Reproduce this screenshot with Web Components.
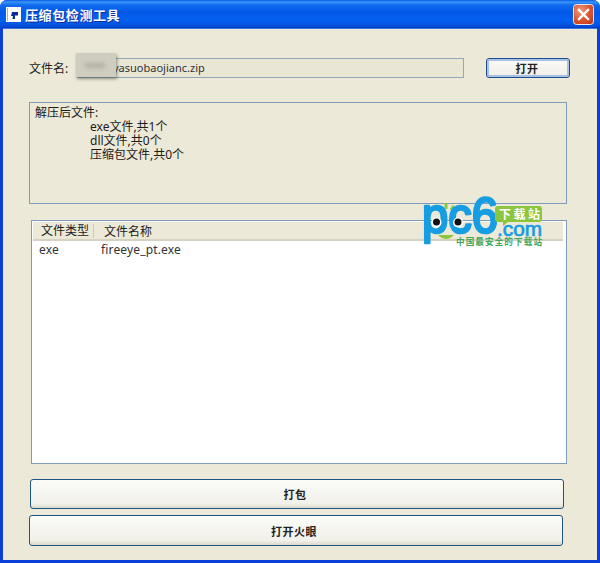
<!DOCTYPE html>
<html>
<head>
<meta charset="utf-8">
<style>
  html, body { margin: 0; padding: 0; }
  body { width: 600px; height: 563px; overflow: hidden; font: 12px "Noto Sans", "Noto Sans CJK SC", sans-serif; color: #1c1c1c; }
</style>
</head>
<body>
<xp-window caption="压缩包检测工具">
  <file-row name="文件名:" value="yasuobaojianc.zip" action="打开"></file-row>
  <result-box>
    <div>解压后文件:</div>
    <div slot="items">exe文件,共1个</div>
    <div slot="items">dll文件,共0个</div>
    <div slot="items">压缩包文件,共0个</div>
  </result-box>
  <file-list>
    <list-row type="exe" name="fireeye_pt.exe"></list-row>
  </file-list>
  <xp-button style="margin:15px 3px 0 1px;height:30px">打包</xp-button>
  <xp-button style="margin:6px 4px 0 0;height:31px">打开火眼</xp-button>
  <pc6-logo></pc6-logo>
</xp-window>

<script>
class XpWindow extends HTMLElement {
  constructor() {
    super();
    this.attachShadow({ mode: "open" }).innerHTML = `
      <style>
        :host { display: flex; flex-direction: column; width: 600px; height: 563px; box-sizing: border-box; border-radius: 7px 7px 0 0; overflow: hidden; position: relative; background: #0a3fd8; }
        .bar { flex: 0 0 28px; display: flex; align-items: center; gap: 4px; padding: 0 6px 0 6px; box-sizing: border-box;
          background: linear-gradient(#0a5ae6 0, #3a94f7 2px, #0f6cf0 5px, #0358e6 12px, #0360f0 20px, #0350dc 26px, #0234c0 28px); }
        .bar svg { display: block; }
        .cap { flex: 1; color: #fff; font: bold 13px "Noto Sans CJK SC", sans-serif; letter-spacing: .6px; text-shadow: 1px 1px 0 #0b2f9e; }
        .body { flex: 1; display: flex; flex-direction: column; margin: 0 3px 3px 3px; padding: 29px 30px 0 26px; background: #ece9d8; border-top: 1px solid #3a7be0; box-sizing: border-box; min-height: 0; }
      </style>
      <div class="bar">
        <svg width="15" height="15" viewBox="0 0 15 15">
          <rect width="15" height="15" fill="#fff"/>
          <path d="M1 1h1v13H1z" fill="#56d0f0"/>
          <path d="M6 5h6v3.5H9V12H6.5l.5-3H5z" fill="#0a2a9c"/>
        </svg>
        <span class="cap"></span>
        <svg width="21" height="21" viewBox="0 0 21 21">
          <defs>
            <radialGradient id="cl" cx=".35" cy=".3" r=".9">
              <stop offset="0" stop-color="#ec9a80"/><stop offset=".55" stop-color="#d9542e"/><stop offset="1" stop-color="#b8381c"/>
            </radialGradient>
          </defs>
          <rect x=".5" y=".5" width="20" height="20" rx="3" fill="url(#cl)" stroke="#f2e6e2"/>
          <path d="M6 6l9 9M15 6l-9 9" stroke="#fff" stroke-width="2.4" stroke-linecap="square"/>
        </svg>
      </div>
      <div class="body"><slot></slot></div>`;
  }
  connectedCallback() {
    this.shadowRoot.querySelector(".cap").textContent = this.getAttribute("caption") || "";
  }
}
customElements.define("xp-window", XpWindow);

class XpButton extends HTMLElement {
  constructor() {
    super();
    this.attachShadow({ mode: "open" }).innerHTML = `
      <style>
        :host { display: flex; align-items: center; justify-content: center; box-sizing: border-box; border: 1px solid #1f5488; border-radius: 3px; padding-right: 4px;
          background: linear-gradient(#fbfbf8, #f1f0ea 85%, #dcd8c8); font: bold 11px "Noto Sans CJK SC", sans-serif; color: #222; letter-spacing: .5px; flex: none; }
        :host([focused]) { border: 1px solid #1f4f8f; box-shadow: inset 0 0 0 2px #a9c0e6; padding-right: 2px; }
      </style>
      <slot></slot>`;
  }
}
customElements.define("xp-button", XpButton);

class FileRow extends HTMLElement {
  constructor() {
    super();
    this.attachShadow({ mode: "open" }).innerHTML = `
      <style>
        :host { display: flex; align-items: center; height: 20px; flex: none; position: relative; }
        .lbl { flex: 0 0 48px; }
        .val { flex: 0 0 387px; height: 20px; box-sizing: border-box; border: 1px solid #8fa9b8; background: #e9e6d6; padding-left: 35px; font-size: 11px; line-height: 18px; white-space: nowrap; overflow: hidden; color: #333; }
        xp-button { flex: 0 0 84px; height: 20px; margin-left: 22px; }
        .blur { position: absolute; left: 47px; top: -5px; width: 40px; height: 24px; background: #cfccc0; box-shadow: 1px 2px 3px rgba(70,70,60,.55); }
        .blur i { position: absolute; left: 9px; top: 10px; width: 20px; height: 5px; background: #b2afa5; filter: blur(2px); }
      </style>
      <span class="lbl"></span><div class="val"></div>
      <xp-button focused></xp-button>
      <div class="blur"><i></i></div>`;
  }
  connectedCallback() {
    const r = this.shadowRoot;
    r.querySelector(".lbl").textContent = this.getAttribute("name");
    r.querySelector(".val").textContent = this.getAttribute("value");
    r.querySelector("xp-button").textContent = this.getAttribute("action");
  }
}
customElements.define("file-row", FileRow);

class ResultBox extends HTMLElement {
  constructor() {
    super();
    this.attachShadow({ mode: "open" }).innerHTML = `
      <style>
        :host { display: block; box-sizing: border-box; height: 102px; margin-top: 24px; border: 1px solid #7f9db9; padding: 3px 5px; line-height: 14px; flex: none; }
        .items { padding-left: 55px; }
      </style>
      <slot></slot>
      <div class="items"><slot name="items"></slot></div>`;
  }
}
customElements.define("result-box", ResultBox);

class FileList extends HTMLElement {
  constructor() {
    super();
    this.attachShadow({ mode: "open" }).innerHTML = `
      <style>
        :host { display: block; box-sizing: border-box; height: 244px; margin: 16px 0 0 2px; border: 1px solid #7f9db9; background: #fff; padding: 1px; flex: none; }
        .head { display: flex; height: 19px; box-sizing: border-box; background: #ece9d8; border-bottom: 2px solid #d6d2c2; align-items: center; margin-right: 2px; }
        .head span:first-child { box-sizing: border-box; width: 61px; padding-left: 8px; border-right: 1px solid #cfccbc; height: 14px; line-height: 14px; }
        .head span:last-child { padding-left: 10px; }
      </style>
      <div class="head"><span>文件类型</span><span>文件名称</span></div>
      <slot></slot>`;
  }
}
customElements.define("file-list", FileList);

class ListRow extends HTMLElement {
  constructor() {
    super();
    this.attachShadow({ mode: "open" }).innerHTML = `
      <style>
        :host { display: flex; height: 17px; align-items: center; padding-left: 6px; color: #333; letter-spacing: .15px; }
        .t { width: 62px; }
      </style>
      <span class="t"></span><span class="n"></span>`;
  }
  connectedCallback() {
    this.shadowRoot.querySelector(".t").textContent = this.getAttribute("type");
    this.shadowRoot.querySelector(".n").textContent = this.getAttribute("name");
  }
}
customElements.define("list-row", ListRow);

class Pc6Logo extends HTMLElement {
  constructor() {
    super();
    this.attachShadow({ mode: "open" }).innerHTML = `
      <style>
        :host { position: absolute; left: 420px; top: 198px; width: 125px; height: 50px; display: block; }
        svg { display: block; overflow: visible; }
        .big { font: 50px "Liberation Sans", sans-serif; fill: #169de2; stroke: #169de2; stroke-width: 2.6; stroke-linejoin: round; }
        .com { font: 20px "Liberation Sans", sans-serif; fill: #169de2; stroke: #169de2; stroke-width: .7; }
        .cn { font: bold 12px "Noto Sans CJK SC", sans-serif; fill: #fff; letter-spacing: 2.5px; }
        .sub { font: bold 8.6px "Noto Sans CJK SC", sans-serif; fill: #3fa75c; }
      </style>
      <svg width="125" height="50" viewBox="0 0 125 50">
        <path d="M18 8l3 4M26 5v6M34 8l-3 4" stroke="#8cc63f" stroke-width="3" fill="none"/>
        <path d="M18 37q8 8 16 0z" fill="#8cc63f"/>
        <text class="big" x="2" y="35" textLength="76" lengthAdjust="spacingAndGlyphs">pc6</text>
        <circle cx="16.5" cy="24.5" r="5" fill="#fff"/><circle cx="38" cy="24.5" r="5" fill="#fff"/>
        <circle cx="16.5" cy="24" r="3.5" fill="#111"/><circle cx="38" cy="24" r="3.5" fill="#111"/>
        <path d="M78 8h41a3 3 0 0 1 3 3v10a3 3 0 0 1-3 3h-31l-5 4v-4h-5a3 3 0 0 1-3-3V11a3 3 0 0 1 3-3z" fill="#8cc63f"/>
        <text class="cn" x="79" y="21">下载站</text>
        <text class="com" x="77" y="38" textLength="45" lengthAdjust="spacingAndGlyphs">.com</text>
        <text class="sub" x="36" y="46.5" textLength="86">中国最安全的下载站</text>
      </svg>`;
  }
}
customElements.define("pc6-logo", Pc6Logo);
</script>
</body>
</html>
